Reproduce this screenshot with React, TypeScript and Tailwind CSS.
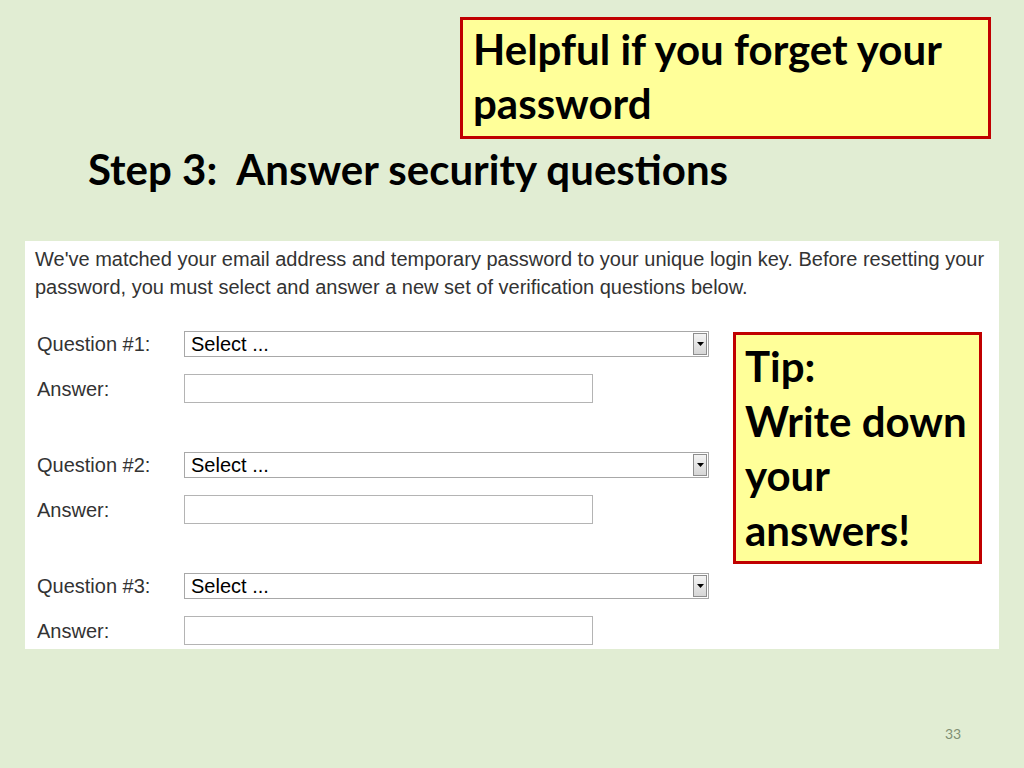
const slideFont = { fontFamily: 'Lato, "Open Sans", sans-serif' };

function SelectBox() {
    return (
        <div className="flex h-[26px] w-[525px] items-center border border-[#a8a8a8] bg-white">
            <span className="flex-1 pl-[6px] text-[20px] leading-none text-black">Select ...</span>
            <div className="mr-[1px] flex h-[22px] w-[14px] items-center justify-center border border-[#8e8e8e] bg-gradient-to-b from-[#f4f4f4] to-[#d6d6d6]">
                <svg width="7" height="4" viewBox="0 0 7 4">
                    <path d="M0 0h7L3.5 4z" fill="#000" />
                </svg>
            </div>
        </div>
    );
}

function QuestionGroup({ num, first }: { num: number; first?: boolean }) {
    return (
        <div className={first ? 'mt-[30px]' : 'mt-[49px]'}>
            <div className="flex h-[26px] items-center">
                <span className="w-[159px] shrink-0 pl-[12px] text-[20px] text-[#333]">Question #{num}:</span>
                <SelectBox />
            </div>
            <div className="mt-[17px] flex h-[29px] items-center">
                <span className="w-[159px] shrink-0 pl-[12px] text-[20px] text-[#333]">Answer:</span>
                <div className="h-[29px] w-[409px] border border-[#b4b4b4] bg-white" />
            </div>
        </div>
    );
}

export default function App() {
    return (
        <div className="relative h-[768px] w-[1024px] overflow-hidden bg-[#e1edd3]">
            <div className="pl-[460px] pt-[17px]" style={slideFont}>
                <div className="h-[122px] w-[531px] border-[3px] border-[#c00000] bg-[#ffff99] px-[10px] pt-[2px] text-[42px] font-bold leading-[54px] text-black">
                    Helpful if you forget your
                    <br />
                    password
                </div>
            </div>

            <h1
                className="h-[60px] whitespace-pre pl-[88px] text-[42px] font-bold leading-[60px] text-black"
                style={slideFont}
            >
                Step 3:  Answer security questions
            </h1>

            <div
                className="relative ml-[25px] mt-[42px] w-[974px] bg-white pb-[4px] pt-[4px]"
                style={{ fontFamily: '"Liberation Sans", Arial, sans-serif' }}
            >
                <p className="whitespace-nowrap pl-[10px] text-[20px] leading-[28px] text-[#333]">
                    We've matched your email address and temporary password to your unique login key. Before resetting your
                    <br />
                    password, you must select and answer a new set of verification questions below.
                </p>

                <QuestionGroup num={1} first />
                <QuestionGroup num={2} />
                <QuestionGroup num={3} />

                <div
                    className="absolute left-[708px] top-[91px] h-[232px] w-[249px] border-[3px] border-[#c00000] bg-[#ffff99] px-[9px] pt-[4px] text-[42px] font-bold leading-[54.5px] text-black"
                    style={slideFont}
                >
                    Tip:
                    <br />
                    Write down
                    <br />
                    your
                    <br />
                    answers!
                </div>
            </div>

            <div
                className="absolute left-[945px] top-[723px] text-[14px] text-[#7f8f72]"
                style={slideFont}
            >
                33
            </div>
        </div>
    );
}
